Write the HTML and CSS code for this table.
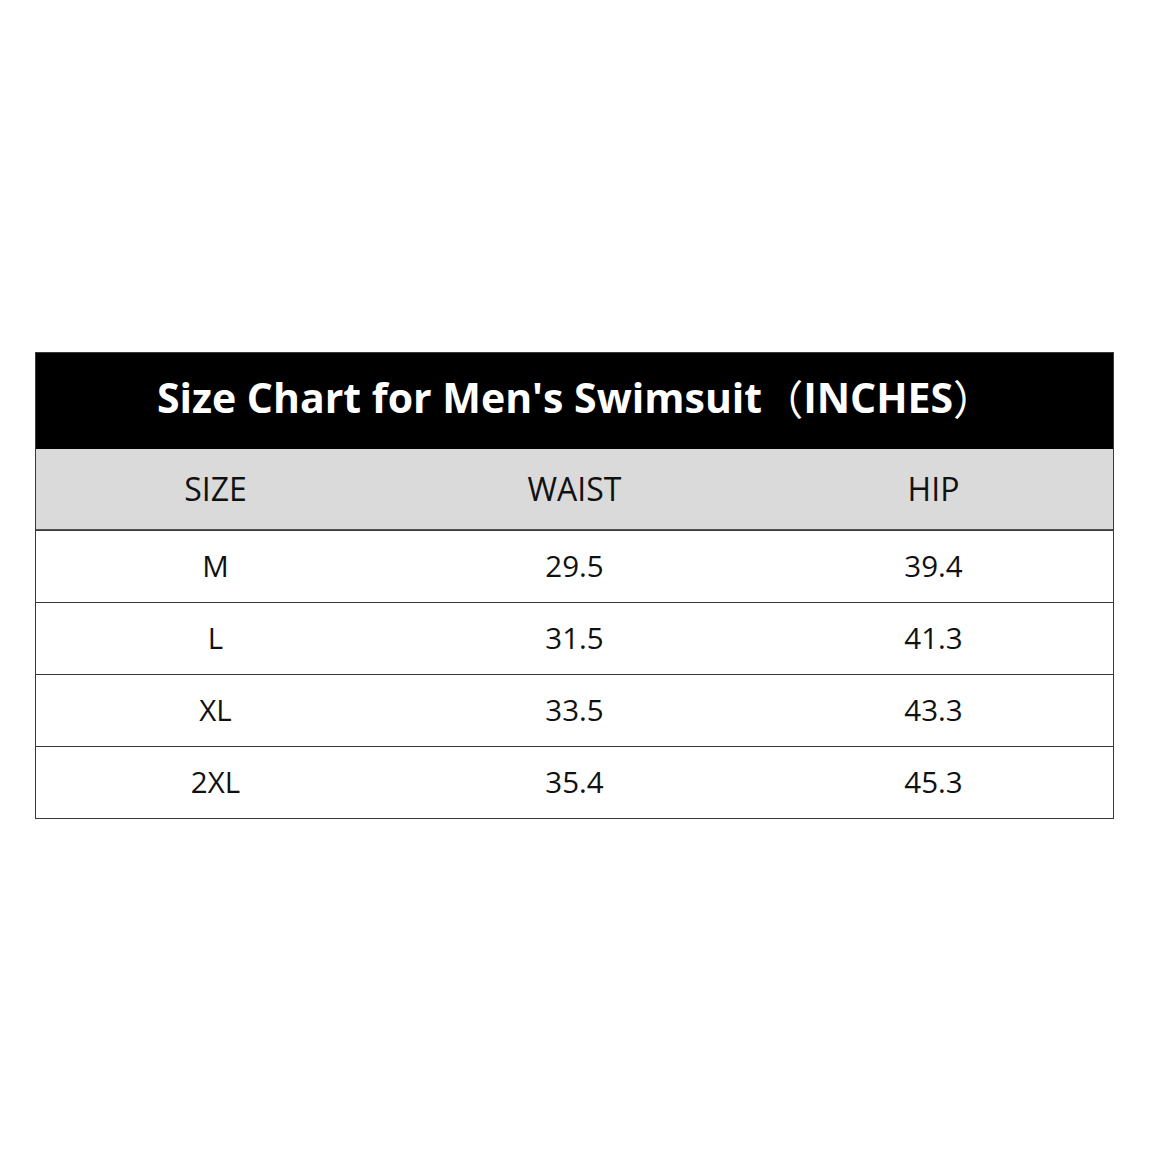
FILE: index.html
```html
<!DOCTYPE html>
<html>
<head>
<meta charset="utf-8">
<link rel="stylesheet" href="styles.css">
</head>
<body>
<div class="page">
  <div class="chart">
    <div class="title">Size Chart for Men's Swimsuit<span class="paren">（</span>INCHES<span class="paren">）</span></div>
    <div class="row head">
      <div class="cell">SIZE</div><div class="cell">WAIST</div><div class="cell">HIP</div>
    </div>
    <div class="row"><div class="cell">M</div><div class="cell">29.5</div><div class="cell">39.4</div></div>
    <div class="row"><div class="cell">L</div><div class="cell">31.5</div><div class="cell">41.3</div></div>
    <div class="row"><div class="cell">XL</div><div class="cell">33.5</div><div class="cell">43.3</div></div>
    <div class="row"><div class="cell">2XL</div><div class="cell">35.4</div><div class="cell">45.3</div></div>
  </div>
</div>
</body>
</html>
```
FILE: styles.css
```css
html, body { margin: 0; padding: 0; background: #fff; }
.page {
  width: 1150px; height: 1150px;
  padding: 352px 0 0 35px;
  box-sizing: border-box;
  font-family: "Open Sans", "Noto Sans CJK SC", sans-serif;
}
.chart {
  width: 1079px;
  border: 1px solid #3a3a3a;
  box-sizing: border-box;
}
.title {
  height: 96px;
  background: #000;
  color: #fff;
  font-weight: 700;
  font-size: 41px;
  display: flex; align-items: center; justify-content: center;
  padding: 0 0 8px 2px;
  box-sizing: border-box;
  letter-spacing: 0;
  white-space: pre;
}
.paren {
  font-family: "Noto Sans CJK SC", sans-serif;
  font-weight: 400;
}
.row {
  display: grid;
  grid-template-columns: 1fr 1fr 1fr;
  height: 72px;
  border-top: 1px solid #3a3a3a;
  box-sizing: border-box;
}
.row.head {
  height: 81px;
  background: #dadada;
  border-top: none;
  border-bottom: 1px solid #555;
}
.row.head + .row { border-top: 1px solid #3a3a3a; }
.cell {
  display: flex; align-items: center; justify-content: center;
  font-size: 29.5px;
  color: #111;
  padding-bottom: 2px;
  box-sizing: border-box;
}
.head .cell { font-size: 32px; }
```
